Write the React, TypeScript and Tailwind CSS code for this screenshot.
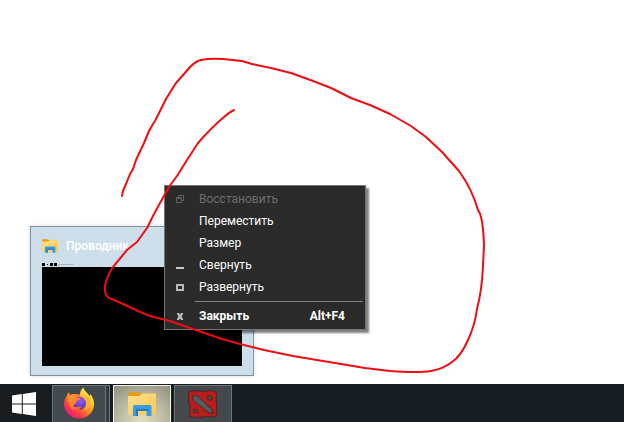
import { ReactNode } from "react";

interface IMenuItem {
  label: string;
  icon?: ReactNode;
  disabled?: boolean;
}

const menuItems: IMenuItem[] = [
  { label: "Восстановить", icon: <RestoreIcon />, disabled: true },
  { label: "Переместить" },
  { label: "Размер" },
  { label: "Свернуть", icon: <MinimizeIcon /> },
  { label: "Развернуть", icon: <MaximizeIcon /> },
];

function RestoreIcon() {
  return (
    <svg viewBox="0 0 8 8" className="size-2" fill="none" stroke="#5c5c5c" shapeRendering="crispEdges">
      <path d="M2.5 2V0.5H7.5V5.5H6" />
      <path d="M0.5 2.5H5.5V7.5H0.5Z" />
      <path d="M0 3.5H6" />
    </svg>
  );
}

function MinimizeIcon() {
  return (
    <svg viewBox="0 0 8 8" className="size-2" shapeRendering="crispEdges">
      <path d="M0 6H8V8H0Z" fill="#c8c8c8" />
    </svg>
  );
}

function MaximizeIcon() {
  return (
    <svg viewBox="0 0 8 8" className="size-2" shapeRendering="crispEdges">
      <path d="M0 1H8V8H0ZM2 3V6H6V3Z" fill="#b8b8b8" fillRule="evenodd" />
    </svg>
  );
}

function CloseIcon() {
  return (
    <svg viewBox="0 0 8 8" className="size-2" fill="#c0c0c0">
      <path d="M1 1H3L4 3L5 1H7V2L5.500 4.500L7 7V8H5L4 6L3 8H1V7L2.500 4.500L1 2Z" />
    </svg>
  );
}

function FolderIcon({ className }: { className: string }) {
  return (
    <svg viewBox="0 0 28 24" className={className}>
      <defs>
        <linearGradient id="folder" x1="0" y1="0" x2="1" y2="1">
          <stop offset="0" stopColor="#ffe08a" />
          <stop offset="1" stopColor="#f7c851" />
        </linearGradient>
      </defs>
      <path d="M0 1Q0 0 1 0H10L13 2H28V8H0Z" fill="#dda01c" />
      <path d="M0 4H11L14 1.500H28V23H0Z" fill="url(#folder)" />
      <path d="M5 24V14.500Q5 13 6.500 13H22Q23.500 13 23.500 14.500V24H18.500V19H10V24Z" fill="#3b9be0" />
      <path d="M8 17H20.500V19H18.500H10V24H8Z" fill="#2478c0" />
    </svg>
  );
}

function WindowsLogo() {
  return (
    <svg viewBox="0 0 24 24" className="size-6" fill="#fff">
      <path d="M0 3.400L9.800 2V11.500H0ZM10.800 1.900L24 0V11.500H10.800ZM0 12.500H9.800V22L0 20.600ZM10.800 12.500H24V24L10.800 22.100Z" />
    </svg>
  );
}

function FirefoxLogo() {
  return (
    <svg viewBox="0 0 32 32" className="size-8">
      <defs>
        <linearGradient id="flame" x1="0.850" y1="0.100" x2="0.200" y2="0.900">
          <stop offset="0" stopColor="#fff04a" />
          <stop offset="0.300" stopColor="#ffc22e" />
          <stop offset="0.550" stopColor="#ff8426" />
          <stop offset="0.780" stopColor="#ff3d45" />
          <stop offset="1" stopColor="#e91e72" />
        </linearGradient>
        <radialGradient id="globe" cx="0.600" cy="0.300" r="0.700">
          <stop offset="0" stopColor="#9059ff" />
          <stop offset="1" stopColor="#5b36a8" />
        </radialGradient>
        <linearGradient id="fox" x1="0" y1="0" x2="1" y2="1">
          <stop offset="0" stopColor="#ffa02e" />
          <stop offset="1" stopColor="#ff5a30" />
        </linearGradient>
      </defs>
      <path
        d="M20.500 0.500C21 4 24.500 5.800 26.500 9C27.200 8.600 27.300 7.700 27.200 7C30 10 31.500 14.500 31 18.500C30 26 24 31.500 16.500 31.500C8 31.500 1.300 25.500 1 17.500C1 13.500 2.500 10.500 3.800 8.800C4 7.400 4.800 6 5.700 5.200L7 8.200C9 7 11 7.200 12.500 7.800C14 7.500 15.500 7.300 17 7.800C16.800 4.500 18.500 1.800 20.500 0.500Z"
        fill="url(#flame)"
      />
      <path d="M5.700 5.200L7 8.200C9 7 11 6.800 12.500 7.300L17 8V11L8 12Z" fill="#ff8a2a" />
      <circle cx="16.200" cy="16.200" r="6.800" fill="url(#globe)" />
      <path
        d="M4.500 10C8 7.500 12 9 13.200 10.500C14.500 10.400 16.500 10.500 17.500 11.500C17 13 15.200 13.300 13.700 14.200C12.800 15 13.200 16.500 13 17C11.500 17 10.300 17.900 10.300 19.100C12.500 21.500 16 18.800 18.300 20.300C16.300 24.800 9.500 24 7 20C5 17 5.500 12.500 4.500 10Z"
        fill="url(#fox)"
      />
      <path d="M18.500 8C22.500 9.500 24.500 13 24 17C23.800 20 22.500 22.500 20.500 23.500C25 22.500 28 18.500 27 14C26 10.500 23 8.500 18.500 8Z" fill="#ffae2b" />
    </svg>
  );
}

function DotaLogo() {
  return (
    <svg viewBox="0 0 30 28" className="h-7 w-[30px]">
      <path
        d="M1 2L6 0.500L13 1.500L24 0.500L28.500 2.500L28 10L29 19L28 27L19 26.500L10 27.500L1.500 26.500L2 18L0.500 9Z"
        fill="#b81f1b"
        stroke="#512323"
      />
      <path d="M4 6.500L8 5L13 9L24 19.500L25.500 23.500L21 23L15 18L6 11.500Z" fill="#575b5d" stroke="#4b2527" />
      <path d="M18.500 6L23 5L24.500 9L22 10.500L19.500 9Z" fill="#4b4547" stroke="#6d1d1c" />
      <path d="M5 19L8.500 19L10.500 22L6 23Z" fill="#4b4547" stroke="#6d1d1c" />
    </svg>
  );
}

function WindowPreview() {
  return (
    <section className="absolute bottom-2 left-[30px] w-56 border border-[#82929c] bg-[#cbdee9] px-[11px] pt-2 pb-[9px] shadow-[0_0_4px_rgba(0,0,0,0.15)]">
      <header className="flex h-[22px] items-center gap-2">
        <FolderIcon className="h-4 w-4" />
        <h1 className="text-[12px] leading-4 font-medium text-white">Проводник</h1>
      </header>
      <div className="flex h-[10px] items-center gap-px pt-1">
        <span className="h-[3px] w-[3px] bg-black" />
        <span className="mx-px h-px w-px bg-black" />
        <span className="h-[3px] w-[3px] bg-black" />
        <span className="h-[3px] w-[3px] bg-black" />
        <span className="h-px w-4 bg-[#aab8c1]" />
      </div>
      <div className="h-[99px] bg-black" />
    </section>
  );
}

function WindowMenu() {
  return (
    <div
      role="menu"
      className="absolute bottom-[54px] left-[164px] w-[202px] border border-[#777] bg-[#2b2b2b] py-[2px] text-[12px] leading-4 text-white shadow-[3px_3px_2px_rgba(0,0,0,0.5)]"
    >
      {menuItems.map((item) => (
        <button
          key={item.label}
          role="menuitem"
          disabled={item.disabled}
          className="flex h-[22px] w-full items-center text-left disabled:text-[#6d6d6d]"
        >
          <span className="flex w-[34px] pl-[11px]">{item.icon}</span>
          {item.label}
        </button>
      ))}
      <hr className="mt-[3px] mr-[2px] mb-[3px] ml-[30px] border-[#808080]" />
      <button role="menuitem" className="flex h-[22px] w-full items-center pr-5 text-left font-bold">
        <span className="flex w-[34px] pl-[11px]">
          <CloseIcon />
        </span>
        <span className="flex-1">Закрыть</span>
        <span>Alt+F4</span>
      </button>
    </div>
  );
}

function Taskbar() {
  return (
    <nav className="flex h-[38px] bg-[#171d20] pt-px">
      <button aria-label="Пуск" className="flex w-[52px] justify-center pt-[7px] pr-1">
        <WindowsLogo />
      </button>
      <button
        aria-label="Firefox"
        className="flex w-[54px] justify-center border border-b-0 border-[#6f7679] bg-[#43494c] pt-px"
      >
        <FirefoxLogo />
      </button>
      <span className="mr-[3px] w-1 border-t border-r border-[#6f7679] bg-[#343a3d]" />
      <button
        aria-label="Проводник"
        className="mr-[3px] flex w-[58px] justify-center border border-b-0 border-[#f4f3e8] bg-[radial-gradient(circle_at_50%_100%,#e2e1bd,#b5b39d_60%,#8f8e82)] pt-[6px]"
      >
        <FolderIcon className="h-6 w-7" />
      </button>
      <button
        aria-label="Dota 2"
        className="flex w-[58px] justify-center border border-b-0 border-[#6f7679] bg-[#43494c] pt-[4px]"
      >
        <DotaLogo />
      </button>
    </nav>
  );
}

function PenStroke() {
  return (
    <svg
      viewBox="0 0 624 384"
      className="pointer-events-none absolute bottom-0 left-0 h-96 w-[624px]"
      fill="none"
      stroke="#ee0d12"
      strokeWidth="2"
      strokeLinecap="round"
      strokeLinejoin="round"
    >
      <path d="M122 196L123 191L126 184L130 174L133 169L136 160L144 143L149 131L153 124L155 121L166 99L176 83L184 74L190 67Q196 61 201 60Q210 58 223 59L242 61L252 64L271 68L291 73L313 81L331 88L351 98L370 105L390 114L411 126L426 137L442 152L459 171Q472 189 478 210Q483 216 484 245L483 266Q482 290 477 309Q475 325 468 340Q461 356 452 362Q443 369 431 371Q418 373 390 371L365 368L329 362L293 356L264 350L240 344L222 339L190 328L170 321L150 316L138 311L123 304L112 299Q106 298 105 291Q104 281 113 267L127 250L137 242L147 228L154 214L165 194L171 184L177 176L187 160L198 143Q211 128 224 117Q228 113 234 110" />
    </svg>
  );
}

export default function App() {
  return (
    <div className="flex min-h-screen flex-col bg-white font-['Roboto','Noto_Sans',sans-serif]">
      <main className="relative flex-1">
        <WindowPreview />
        <WindowMenu />
        <PenStroke />
      </main>
      <Taskbar />
    </div>
  );
}
